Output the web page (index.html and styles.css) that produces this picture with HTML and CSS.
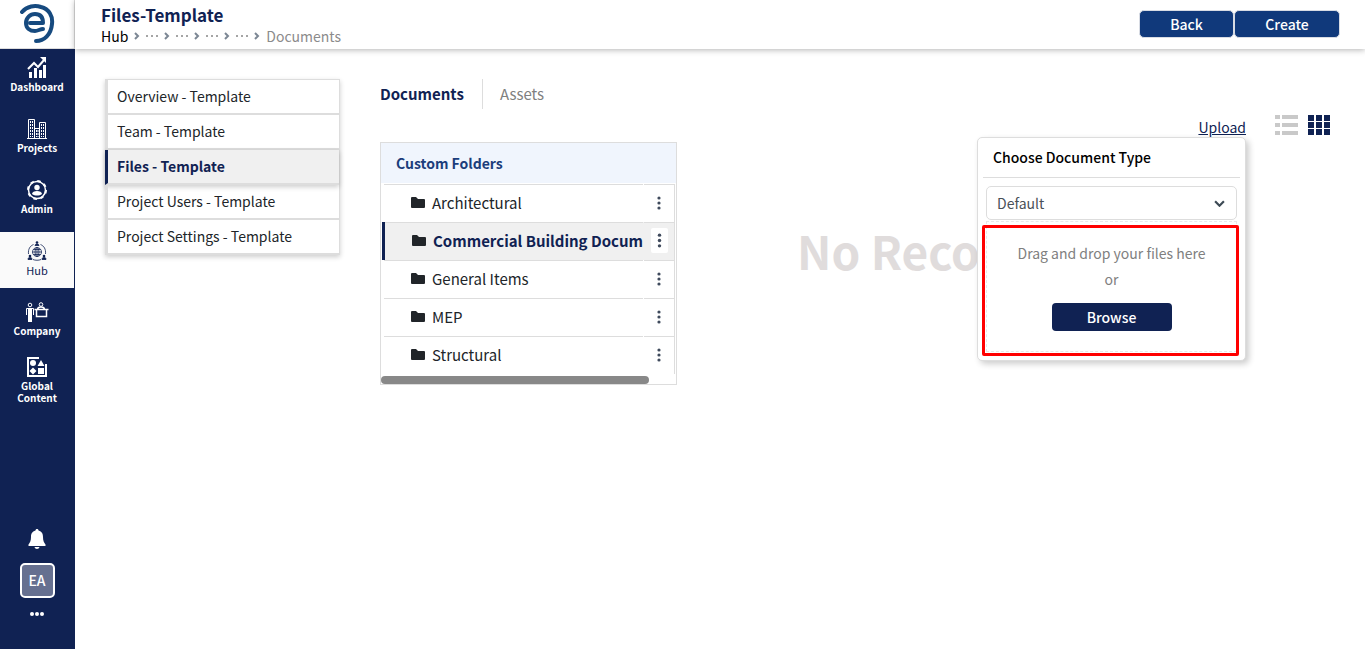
FILE: index.html
```html
<!DOCTYPE html>
<html lang="en">
<head>
  <meta charset="utf-8">
  <title>Files-Template</title>
  <link rel="stylesheet" href="styles.css">
</head>
<body>
  <nav class="sidebar">
    <a class="logo" href="#" aria-label="Home">
      <svg width="36" height="40" viewBox="0 0 36 40" fill="none" stroke="#164a7f" stroke-linecap="round">
        <path d="M3 8C8 2 16 1 22 3C30 5 34 12 33 20C32 31 25 37 17 37" stroke-width="4"/>
        <path d="M11 19H24C24 13 21 10 16 10C11 10 7 14 7 19C7 24 11 27 16 27C19 27 21 25 24 25" stroke-width="4" stroke-linejoin="round"/>
      </svg>
    </a>
    <a class="nav-item" href="#">
      <svg width="20" height="21" viewBox="0 0 20 21" fill="#fff">
        <path d="M2 15h3v6H2zM7 11h3v10H7zM12 13h3v8h-3zM16 8h3v13h-3z"/>
        <path d="M1 12l6-6 4 4 6-7" fill="none" stroke="#fff" stroke-width="2"/>
        <path d="M13 0h6v6z"/>
      </svg>
      <span>Dashboard</span>
    </a>
    <a class="nav-item" href="#">
      <svg width="20" height="20" viewBox="0 0 20 20" fill="none" stroke="#fff">
        <path d="M1.500 20V.5h6V20M7.500 9.500h5V20M12.500 20V3.500h6V20M0 19.500h20"/>
        <path d="M3.500 2v16M5.500 2v16M9.500 11v7M11 11v7M14.500 5v13M16.500 5v13" stroke-dasharray="2 1"/>
      </svg>
      <span>Projects</span>
    </a>
    <a class="nav-item" href="#">
      <svg width="20" height="20" viewBox="0 0 20 20">
        <circle cx="10" cy="10" r="8.500" fill="none" stroke="#fff" stroke-width="1.500"/>
        <circle cx="10" cy="10" r="9" fill="none" stroke="#fff" stroke-width="2" stroke-dasharray="3.500 3.570"/>
        <circle cx="10" cy="7.500" r="2.700" fill="#fff"/>
        <path d="M5 14c0-4 10-4 10 0-3 2-7 2-10 0z" fill="#fff"/>
      </svg>
      <span>Admin</span>
    </a>
    <a class="nav-item active" href="#">
      <svg width="20" height="20" viewBox="0 0 20 20" fill="none" stroke="#102253" stroke-width=".8">
        <circle cx="10" cy="11" r="4.500"/>
        <path d="M5.500 11h9M10 6.500v9M6.500 8.500h7M6.500 13.500h7"/>
        <ellipse cx="10" cy="11" rx="2" ry="4.500"/>
        <path d="M6.500 3.500C3 5 1 8 1.500 13M13.500 3.500C17 5 19 8 18.500 13M6 18.500c2 1 6 1 8 0"/>
        <path d="M8 4.500c0-2 4-2 4 0zM1 18.500c0-3 4-3 4 0zM15 18.500c0-3 4-3 4 0z" fill="#102253"/>
        <g fill="#102253" stroke="none"><circle cx="10" cy="1.500" r="1.300"/><circle cx="3" cy="15" r="1.300"/><circle cx="17" cy="15" r="1.300"/></g>
      </svg>
      <span>Hub</span>
    </a>
    <a class="nav-item" href="#">
      <svg width="24" height="20" viewBox="0 0 24 20" fill="none" stroke="#fff">
        <circle cx="5" cy="3" r="1.800"/>
        <path d="M1.500 13V6.500h7V13M3.500 7v12.500M6.500 7v12.500M3 19.500h4"/>
        <path d="M5 7v12" stroke-width="2"/>
        <circle cx="16" cy="2.500" r="1.800"/>
        <path d="M12.500 7.500c0-3.500 7-3.500 7 0M9.500 7.500h14M11.500 8v6.500h10V8" stroke-width="1.500"/>
      </svg>
      <span>Company</span>
    </a>
    <a class="nav-item" href="#">
      <svg width="20" height="20" viewBox="0 0 20 20" fill="#fff">
        <path d="M12 1H1v18h18V7" fill="none" stroke="#fff" stroke-width="2"/>
        <circle cx="6" cy="6" r="3"/>
        <path d="M14 3l3.500 6h-7zM6 10.500l3.500 3.500L6 17.500 2.500 14zM11 11h6v6h-6z"/>
      </svg>
      <span>Global<br>Content</span>
    </a>
    <div class="sidebar-foot">
      <button class="icon-btn" aria-label="Notifications">
        <svg width="18" height="20" viewBox="0 0 18 20" fill="#fff">
          <path d="M9 0c1 0 1.500.7 1.500 1.600C14 2.500 15 5 15 8c0 4 1 5.500 2.500 7.500V17H.5v-1.500C2 13.500 3 12 3 8c0-3 1-5.500 4.500-6.400C7.500.7 8 0 9 0zM6.500 18h5c-.5 2.500-4.500 2.500-5 0z"/>
        </svg>
      </button>
      <button class="avatar">EA</button>
      <button class="icon-btn" aria-label="More">
        <svg width="16" height="4" viewBox="0 0 16 4" fill="#fff"><circle cx="3" cy="2" r="2"/><circle cx="8" cy="2" r="2"/><circle cx="13" cy="2" r="2"/></svg>
      </button>
    </div>
  </nav>

  <div class="page">
    <header class="topbar">
      <div>
        <h1>Files-Template</h1>
        <nav class="crumbs">
          <a class="first" href="#">Hub</a>
          <svg class="chev" viewBox="0 0 6 8"><path d="M1 1l3 3-3 3"/></svg>
          <a href="#" aria-label="Level 1"><svg class="more" viewBox="0 0 12 2"><path d="M0 0h2v2H0zM5 0h2v2H5zM10 0h2v2h-2z"/></svg></a>
          <svg class="chev" viewBox="0 0 6 8"><path d="M1 1l3 3-3 3"/></svg>
          <a href="#" aria-label="Level 2"><svg class="more" viewBox="0 0 12 2"><path d="M0 0h2v2H0zM5 0h2v2H5zM10 0h2v2h-2z"/></svg></a>
          <svg class="chev" viewBox="0 0 6 8"><path d="M1 1l3 3-3 3"/></svg>
          <a href="#" aria-label="Level 3"><svg class="more" viewBox="0 0 12 2"><path d="M0 0h2v2H0zM5 0h2v2H5zM10 0h2v2h-2z"/></svg></a>
          <svg class="chev" viewBox="0 0 6 8"><path d="M1 1l3 3-3 3"/></svg>
          <a href="#" aria-label="Level 4"><svg class="more" viewBox="0 0 12 2"><path d="M0 0h2v2H0zM5 0h2v2H5zM10 0h2v2h-2z"/></svg></a>
          <svg class="chev" viewBox="0 0 6 8"><path d="M1 1l3 3-3 3"/></svg>
          <span>Documents</span>
        </nav>
      </div>
      <div class="actions">
        <button class="back">Back</button>
        <button class="create">Create</button>
      </div>
    </header>

    <main class="content">
      <nav class="side-menu">
        <a href="#">Overview - Template</a>
        <a href="#">Team - Template</a>
        <a class="active" href="#">Files - Template</a>
        <a href="#">Project Users - Template</a>
        <a href="#">Project Settings - Template</a>
      </nav>

      <section class="documents">
        <nav class="tabs">
          <a class="active" href="#">Documents</a>
          <a href="#">Assets</a>
        </nav>

        <div class="panels">
          <div class="folders">
            <h2>Custom Folders</h2>
            <ul>
              <li>
                <a href="#"><svg class="folder" viewBox="0 0 14 11"><path d="M0 1q0-1 1-1h4l2 2h6q1 0 1 1v7q0 1-1 1H1q-1 0-1-1z"/></svg><span>Architectural</span></a>
                <button class="dots" aria-label="Options"><svg width="4" height="14" viewBox="0 0 4 14"><circle cx="2" cy="2" r="1.600"/><circle cx="2" cy="7" r="1.600"/><circle cx="2" cy="12" r="1.600"/></svg></button>
              </li>
              <li class="active">
                <a href="#"><svg class="folder" viewBox="0 0 14 11"><path d="M0 1q0-1 1-1h4l2 2h6q1 0 1 1v7q0 1-1 1H1q-1 0-1-1z"/></svg><span>Commercial Building Docum</span></a>
                <button class="dots" aria-label="Options"><svg width="4" height="14" viewBox="0 0 4 14"><circle cx="2" cy="2" r="1.600"/><circle cx="2" cy="7" r="1.600"/><circle cx="2" cy="12" r="1.600"/></svg></button>
              </li>
              <li>
                <a href="#"><svg class="folder" viewBox="0 0 14 11"><path d="M0 1q0-1 1-1h4l2 2h6q1 0 1 1v7q0 1-1 1H1q-1 0-1-1z"/></svg><span>General Items</span></a>
                <button class="dots" aria-label="Options"><svg width="4" height="14" viewBox="0 0 4 14"><circle cx="2" cy="2" r="1.600"/><circle cx="2" cy="7" r="1.600"/><circle cx="2" cy="12" r="1.600"/></svg></button>
              </li>
              <li>
                <a href="#"><svg class="folder" viewBox="0 0 14 11"><path d="M0 1q0-1 1-1h4l2 2h6q1 0 1 1v7q0 1-1 1H1q-1 0-1-1z"/></svg><span>MEP</span></a>
                <button class="dots" aria-label="Options"><svg width="4" height="14" viewBox="0 0 4 14"><circle cx="2" cy="2" r="1.600"/><circle cx="2" cy="7" r="1.600"/><circle cx="2" cy="12" r="1.600"/></svg></button>
              </li>
              <li>
                <a href="#"><svg class="folder" viewBox="0 0 14 11"><path d="M0 1q0-1 1-1h4l2 2h6q1 0 1 1v7q0 1-1 1H1q-1 0-1-1z"/></svg><span>Structural</span></a>
                <button class="dots" aria-label="Options"><svg width="4" height="14" viewBox="0 0 4 14"><circle cx="2" cy="2" r="1.600"/><circle cx="2" cy="7" r="1.600"/><circle cx="2" cy="12" r="1.600"/></svg></button>
              </li>
            </ul>
            <div class="scroll"></div>
          </div>

          <div class="files">
            <div class="tools">
              <div class="upload">
                <a href="#">Upload</a>
                <div class="popup">
                  <label for="doc-type">Choose Document Type</label>
                  <div class="select-box">
                    <select id="doc-type"><option>Default</option></select>
                    <svg viewBox="0 0 10 6"><path d="M1 1l4 4 4-4"/></svg>
                  </div>
                  <div class="drop">
                    <p>Drag and drop your files here</p>
                    <p>or</p>
                    <button>Browse</button>
                  </div>
                </div>
              </div>
              <button class="icon-btn" aria-label="List view">
                <svg width="23" height="20" viewBox="0 0 23 20" fill="#c9c9c9"><path d="M0 0h5v4H0zM7 0h16v4H7zM0 8h5v4H0zM7 8h16v4H7zM0 16h5v4H0zM7 16h16v4H7z"/></svg>
              </button>
              <button class="icon-btn" aria-label="Grid view">
                <svg width="23" height="20" viewBox="0 0 23 20" fill="#102253"><path d="M0 0h6v6H0zM8 0h6v6H8zM16 0h6v6h-6zM0 7h6v6H0zM8 7h6v6H8zM16 7h6v6h-6zM0 14h6v6H0zM8 14h6v6H8zM16 14h6v6h-6z"/></svg>
              </button>
            </div>
            <p class="empty">No Records</p>
          </div>
        </div>
      </section>
    </main>
  </div>
</body>
</html>
```

FILE: styles.css
```css
* {
  box-sizing: border-box;
}

body {
  margin: 0;
  display: flex;
  min-height: 100vh;
  font-family: "Noto Sans CJK SC", "Noto Sans", sans-serif;
  font-size: 14px;
  line-height: 20px;
  color: #212529;
  background: #fff;
}

h1, h2, p, ul {
  margin: 0;
  padding: 0;
}

a {
  color: inherit;
  text-decoration: none;
}

button {
  font-family: inherit;
  cursor: pointer;
}

svg {
  display: block;
  flex: none;
}

/* sidebar */
.sidebar {
  width: 75px;
  flex: none;
  display: flex;
  flex-direction: column;
  gap: 5px;
  background: #102253;
  color: #fff;
}

.logo {
  height: 49px;
  margin-bottom: -5px;
  display: flex;
  align-items: center;
  justify-content: center;
  background: #fff;
  border-right: 1px solid #ddd;
  border-bottom: 1px solid #ddd;
}

.nav-item {
  height: 56px;
  margin-right: 1px;
  padding-bottom: 4px;
  display: flex;
  flex-direction: column;
  align-items: center;
  justify-content: center;
  gap: 3px;
  font-size: 10px;
  line-height: 12px;
  font-weight: 700;
  text-align: center;
}

.nav-item.active {
  background: #fafafa;
  color: #102253;
  font-size: 11px;
  font-weight: 400;
}

.sidebar-foot {
  margin: auto 1px 0 0;
  padding-bottom: 33px;
  display: flex;
  flex-direction: column;
  align-items: center;
  gap: 14px;
}

.icon-btn {
  padding: 0;
  border: none;
  background: none;
}

.avatar {
  width: 35px;
  height: 35px;
  padding: 0 0 2px;
  border: 2px solid #fff;
  border-radius: 5px;
  background: #667090;
  color: #fff;
  font-size: 14px;
  font-weight: 500;
}

/* header */
.page {
  flex: 1;
  min-width: 0;
}

.topbar {
  height: 49px;
  padding: 0 25px 0 26px;
  display: flex;
  align-items: center;
  justify-content: space-between;
  box-shadow: 0 1px 6px rgba(0, 0, 0, 0.3);
}

h1 {
  font-size: 17px;
  line-height: 22px;
  font-weight: 700;
  color: #102253;
}

.crumbs {
  display: flex;
  align-items: center;
  gap: 6px;
  color: #8b8b8b;
}

.crumbs .first {
  color: #000;
}

.chev {
  width: 6px;
  height: 8px;
  fill: none;
  stroke: #7c8794;
  stroke-width: 2;
}

.more {
  width: 12px;
  height: 2px;
  fill: #a5a5a5;
}

.actions {
  display: flex;
  margin-bottom: 2px;
}

.actions button {
  height: 28px;
  padding: 0;
  border: 1px solid #d8dce4;
  border-radius: 5px;
  background: #10397b;
  color: #fff;
  font-size: 14px;
  font-weight: 500;
}

.actions .back {
  width: 95px;
}

.actions .create {
  width: 106px;
}

/* content */
.content {
  display: flex;
  align-items: flex-start;
  gap: 40px;
  padding: 30px 26px 0 30px;
}

.side-menu {
  width: 235px;
  flex: none;
  border: 1px solid #ddd;
  border-width: 1px 1px 1px 0;
  box-shadow: 0 2px 5px rgba(0, 0, 0, 0.2);
}

.side-menu a {
  display: block;
  height: 35px;
  padding-left: 9px;
  line-height: 33px;
  border-left: 3px solid #ddd;
  border-bottom: 2px solid #ddd;
}

.side-menu a:last-child {
  height: 34px;
  border-bottom-width: 1px;
}

.side-menu .active {
  background: #f0f0f0;
  border-left-color: #102253;
  color: #102253;
  font-weight: 700;
  box-shadow: 0 2px 5px rgba(0, 0, 0, 0.2);
}

.documents {
  flex: 1;
  min-width: 0;
}

.tabs {
  display: flex;
  font-size: 15px;
  line-height: 30px;
  color: #808080;
}

.tabs .active {
  padding-right: 18px;
  margin-right: 17px;
  border-right: 1px solid #ddd;
  color: #102253;
  font-weight: 700;
}

.panels {
  display: flex;
  align-items: flex-start;
}

/* folder tree */
.folders {
  width: 297px;
  flex: none;
  margin-top: 33px;
  border: 1px solid #ddd;
}

h2 {
  height: 40px;
  padding-left: 15px;
  font-size: 14px;
  line-height: 40px;
  font-weight: 700;
  color: #1b3d7b;
  background: #f0f5fd;
}

.folders ul {
  list-style: none;
  margin: 1px 1px 0 1px;
  border-right: 1px solid #ddd;
}

.folders li {
  height: 38px;
  display: flex;
  gap: 1px;
  border-left: 2px solid #fff;
}

.folders li > * {
  border: none;
  border-top: 1px solid #ddd;
}

.folders li a {
  flex: 1;
  min-width: 0;
  display: flex;
  align-items: center;
  gap: 7px;
  padding: 0 0 2px 27px;
  font-size: 15px;
  white-space: nowrap;
  overflow: hidden;
}

.folder {
  width: 14px;
  height: 11px;
  fill: #212529;
}

.dots {
  width: 30px;
  padding: 0 0 2px;
  display: flex;
  align-items: center;
  justify-content: center;
  background: none;
  fill: #3f4a5c;
}

.folders .active {
  border-left: 3px solid #102253;
  background: #f0f0f0;
  color: #102253;
  font-weight: 700;
}

.folders .active .dots svg {
  width: 17px;
  height: 25px;
  padding: 5px 6px;
  border-radius: 2px;
  background: #fff;
}

.scroll {
  width: 268px;
  height: 8px;
  margin-top: 2px;
  border-radius: 4px;
  background: #888;
}

/* file list */
.files {
  flex: 1;
  min-width: 0;
  padding-right: 8px;
}

.tools {
  display: flex;
  justify-content: flex-end;
  align-items: center;
  gap: 10px;
  padding-top: 4px;
}

.upload {
  position: relative;
  margin-right: 19px;
  padding-top: 4px;
  color: #102253;
}

.upload > a {
  text-decoration: underline;
}

.empty {
  padding: 75px 0 0 120px;
  font-size: 46px;
  line-height: 76px;
  font-weight: 700;
  color: #e0dcdc;
  white-space: nowrap;
}

/* upload popup, opens under the link */
.popup {
  position: absolute;
  top: 24px;
  right: 0;
  z-index: 1;
  width: 269px;
  padding: 0 5px 8px;
  border: 1px solid #ddd;
  border-radius: 5px;
  background: #fff;
  box-shadow: 3px 3px 6px rgba(0, 0, 0, 0.2);
}

.popup label {
  display: block;
  height: 40px;
  padding-left: 10px;
  line-height: 39px;
  font-weight: 500;
  color: #000;
  border-bottom: 1px solid #ddd;
}

.select-box {
  position: relative;
  margin: 8px 3px 0;
}

.select-box select {
  display: block;
  width: 100%;
  height: 34px;
  padding: 0 10px 1px;
  appearance: none;
  border: 1px solid #ddd;
  border-radius: 5px;
  background: #fff;
  color: #495057;
  font: inherit;
}

.select-box svg {
  position: absolute;
  right: 12px;
  top: 14px;
  width: 11px;
  height: 7px;
  fill: none;
  stroke: #3d4a55;
  stroke-width: 2;
}

.drop {
  position: relative;
  height: 131px;
  margin: 1px 3px 0;
  padding-top: 18px;
  border: 1px dashed #e8e8e8;
  text-align: center;
  line-height: 26px;
  color: #808080;
}

.drop::after {
  content: "";
  position: absolute;
  top: 3px;
  left: -5px;
  right: -3px;
  bottom: -5px;
  border: 3px solid #f00;
  border-radius: 2px;
  pointer-events: none;
}

.drop button {
  width: 120px;
  height: 28px;
  margin-top: 11px;
  padding: 0;
  border: none;
  border-radius: 4px;
  background: #102253;
  color: #fff;
  font-size: 14px;
  font-weight: 500;
}
```
